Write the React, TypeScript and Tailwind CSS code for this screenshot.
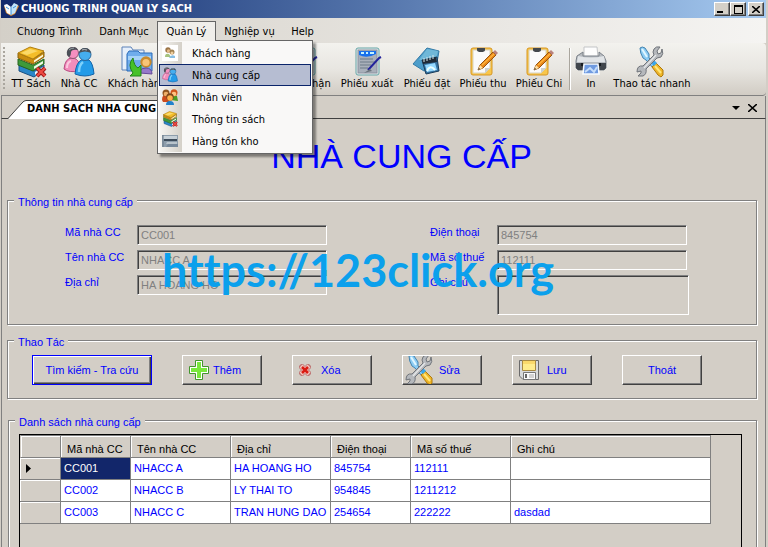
import type { ReactNode } from "react";

const UI_FONT = "font-['DejaVu_Sans_Condensed','Noto_Sans',sans-serif]";

type IconProps = { className?: string };

function BooksIcon({ className = "size-8" }: IconProps) {
  return (
    <svg viewBox="0 0 32 32" className={className} aria-hidden="true">
      <path d="M4 19 L19 25 L29 19 V24 L19 31 L4 25Z" fill="#2a86c8" stroke="#1a4f80" />
      <path d="M20 26 L28 21 V23.500 L20 29Z" fill="#eef6fb" />
      <path d="M3 13 L18 19 L29 13 V18 L18 25 L3 19Z" fill="#3f9a3a" stroke="#28651f" />
      <path d="M19 20.500 L28 15 V17.500 L19 23Z" fill="#f4f8ec" />
      <path d="M3 7 L18 13 L29 6 V11 L18 18 L3 12Z" fill="#c98d10" stroke="#8a620c" />
      <path d="M19 14.500 L28 8.500 V10.500 L19 16.500Z" fill="#fffbe6" />
      <path d="M3 7 L15 1 L29 5 L18 13Z" fill="#f4bd28" stroke="#b17e0f" />
      <path d="M6 7 L15 3 L23 5 L12 9Z" fill="#fbd968" />
      <path d="M22 22 L30 30 M30 22 L22 30" stroke="#9c1616" strokeWidth="4" />
      <path d="M22 22 L30 30 M30 22 L22 30" stroke="#ee4a42" strokeWidth="2.2" />
    </svg>
  );
}

function SuppliersIcon({ className = "size-8" }: IconProps) {
  return (
    <svg viewBox="0 0 32 32" className={className} aria-hidden="true">
      <path d="M1 23 Q2 12 9 12 Q14 12 16 17 V25 Q6 27 1 23Z" fill="#f28dbb" stroke="#b84a80" />
      <path d="M4 22 Q4 16 8 15" fill="none" stroke="#fbc9df" strokeWidth="2" />
      <circle cx="10" cy="7" r="5.5" fill="#f58fc0" stroke="#8d5570" />
      <path d="M4 9 Q3 1 10 1 Q14 1 15 4 Q9 3 8 6 Q8 10 6 11Z" fill="#4b5057" />
      <path d="M6 4 Q8 2 11 2" fill="none" stroke="#9fa5ab" />
      <path d="M12 28 Q13 17 18 14 H26 Q30 17 31 28 Q22 32 12 28Z" fill="#249be8" stroke="#1263a8" />
      <path d="M16 26 Q16 19 20 16" fill="none" stroke="#7ed1fa" strokeWidth="2.5" />
      <circle cx="22" cy="8.500" r="6" fill="#45aeef" stroke="#2a679b" />
      <path d="M16 7 Q17 2 22 2 Q27 2 28 7 Q22 4 16 7Z" fill="#4b5057" />
      <path d="M19 4 Q21 3 24 4" fill="none" stroke="#b4babf" />
    </svg>
  );
}

function CustomerFolderIcon({ className = "size-8" }: IconProps) {
  return (
    <svg viewBox="0 0 32 32" className={className} aria-hidden="true">
      <path d="M1 1 H10 L12 4 H23 V24 H1Z" fill="#e6effa" stroke="#5c82b8" />
      <path d="M6 8 L8 5 H17 L19 7 H31 V25 H6Z" fill="#6facec" stroke="#2b6bb7" />
      <path d="M7 10 H30 V14 H7Z" fill="#a6d2f8" />
      <circle cx="25" cy="16" r="5.7" fill="#c88a2c" />
      <circle cx="25" cy="16.5" r="3.6" fill="#f8c477" />
      <path d="M19 27 V25 Q20 22 25 22 Q31 22 31 28Z" fill="#9678c9" stroke="#654998" />
      <path d="M12 12 Q13 20 17 22 L20 19 V30 H9 L12 27 Q6 19 12 12Z" fill="#46c128" stroke="#23821a" />
    </svg>
  );
}

function VoucherIcon({ className = "size-8" }: IconProps) {
  return (
    <svg viewBox="0 0 32 32" className={className} aria-hidden="true">
      <rect x="5" y="2" width="23" height="27" rx="2" fill="#e6ecec" stroke="#64a4a6" />
      <rect x="7" y="4" width="19" height="23" fill="#a9b0ba" stroke="#8b92a0" />
      <path d="M8 5 H25 V8 Q16 13 8 9Z" fill="#1770ed" />
      <path d="M10 7 h3 m2 0 h2 m2 0 h4" stroke="#c6f4ff" strokeWidth="2" />
      <path d="M9 13 H22 M9 16 H24 M9 19 H20 M9 22 H17" stroke="#6d7a88" />
      <path d="M17 24 L28 12 L30 11" fill="none" stroke="#24249b" strokeWidth="2" />
      <path d="M13 27 L19 23 L21 25Z" fill="#6a747b" />
    </svg>
  );
}

function OrderIcon({ className = "size-8" }: IconProps) {
  return (
    <svg viewBox="0 0 32 32" className={className} aria-hidden="true">
      <path d="M2 18 L16 2 L28 5 L25 22 L13 25Z" fill="#4c9dca" stroke="#347ba6" />
      <path d="M16 3 L27 5 L25 13 L8 14Z" fill="#70b8d8" />
      <path d="M11 14 L26 11 L28 25 L15 28Z" fill="#3774a3" stroke="#173c5b" />
      <path d="M11 14 L25 11 L26 16 L12 18Z" fill="#202c38" />
      <path d="M13 12 v4 m3 -5 v4 m3 -5 v4 m3 -5 v4" stroke="#d5e7ec" />
      <path d="M14 19 L24 17 L26 24 L16 26Z" fill="#94d9ff" />
      <path d="M16 25 Q19 18 24 24" fill="none" stroke="#eaffff" strokeWidth="2" />
    </svg>
  );
}

function ClipboardIcon({ className = "size-8" }: IconProps) {
  return (
    <svg viewBox="0 0 32 32" className={className} aria-hidden="true">
      <rect x="4" y="2" width="21" height="27" rx="2" fill="#f8c64b" stroke="#d69724" />
      <path d="M6 4 H23 V22 L18 27 H6Z" fill="#fafafa" stroke="#d7d1bd" />
      <path d="M18 27 V22 H23Z" fill="#cbd0d0" />
      <path d="M10 2 H18 V4 Q18 6 14 6 Q10 6 10 4Z" fill="#43484d" />
      <path d="M11 24 L13 19 L26 6 L29 9 L16 22Z" fill="#e88618" stroke="#965410" />
      <path d="M15 19 L27 8" stroke="#ffb53c" strokeWidth="1.2" />
      <path d="M11 24 L13 19 L16 22Z" fill="#ffe0a2" />
      <path d="M11 24 L12 22 L13 23Z" fill="#262626" />
      <path d="M26 6 L29 9 L31 7 L28 4Z" fill="#ba827d" />
    </svg>
  );
}

function PrinterIcon({ className = "size-8" }: IconProps) {
  return (
    <svg viewBox="0 0 32 32" className={className} aria-hidden="true">
      <path d="M9 1 H22 L23 11 H9Z" fill="#fdfdfd" stroke="#c3c5c7" />
      <path d="M2 10 L8 6 V10 H24 V6 L29 10 L31 15 V22 L29 24 H3 L1 22 V15Z" fill="#b7bbc0" stroke="#7b8189" />
      <path d="M3 10 Q16 13 29 10 L30 16 H2Z" fill="#e1e4e7" />
      <path d="M1 17 H31 V22 L29 24 H3 L1 22Z" fill="#41464c" />
      <path d="M6 17 H26 V20 H6Z" fill="#181c21" />
      <path d="M9 18 H23 L24 28 H8Z" fill="#6f9ae0" stroke="#f8fcff" strokeWidth="1.5" />
      <path d="M10 26 L15 22 L19 26 L22 21" stroke="#c5ddfa" fill="none" strokeWidth="2" />
    </svg>
  );
}

function ToolsIcon({ className = "size-8" }: IconProps) {
  return (
    <svg viewBox="0 0 32 32" className={className} aria-hidden="true">
      <path d="M4 2 Q6 0 9 2 L13 8 V12 L20 19 L17 22 L10 14 L7 12 Q4 7 4 2Z" fill="#8cccf4" stroke="#4484b0" />
      <path d="M6 3 L11 11" stroke="#dff6ff" strokeWidth="2" />
      <path d="M16 21 L20 17 L27 24 V29 L25 31 L22 29Z" fill="#efb629" stroke="#ae790b" />
      <path d="M19 20 L25 27" stroke="#ffe77a" strokeWidth="2" />
      <path d="M15 17 L18 14 L21 17 L18 20Z" fill="#3aa7ec" />
      <path d="M18 3 Q20 0 24 1 L21 5 L22 8 L25 7 L26 3 Q28 8 25 11 L21 12 L10 23 Q11 28 7 30 L2 30 L5 27 L5 25 L1 26 Q1 19 7 20 L18 9 Q16 6 18 3Z" fill="#b5b8bc" stroke="#71757b" />
      <path d="M8 22 L20 9" stroke="#e5e7e9" strokeWidth="1.3" />
    </svg>
  );
}

function CustomerIcon({ className = "size-4" }: IconProps) {
  return (
    <svg viewBox="0 0 16 16" className={className} aria-hidden="true">
      <path d="M0 0 H16 V16 H0Z" fill="#fff" />
      <circle cx="6" cy="5" r="2.7" fill="#9b7548" />
      <circle cx="6.500" cy="6" r="1.700" fill="#e7bc87" />
      <path d="M3 12 Q3 8 7 9 L9 12Z" fill="#a6c37f" />
      <circle cx="10" cy="7" r="2.500" fill="#a08050" />
      <circle cx="10" cy="8" r="1.500" fill="#efcf9f" />
      <path d="M7 13 Q9 9 13 11 V13Z" fill="#85bde5" />
    </svg>
  );
}

function StaffIcon({ className = "size-4" }: IconProps) {
  return (
    <svg viewBox="0 0 16 16" className={className} aria-hidden="true">
      <path d="M0 11 Q0 5 5 6 L8 13 H1Z" fill="#cc4b1d" />
      <circle cx="4" cy="4" r="3.5" fill="#8f5621" />
      <circle cx="4" cy="5" r="2.3" fill="#efaf68" />
      <path d="M8 11 Q10 5 15 7 L16 12Z" fill="#4a9d24" />
      <circle cx="12" cy="3.8" r="3.5" fill="#d0561c" />
      <circle cx="12" cy="5" r="2.3" fill="#ffc380" />
      <circle cx="8" cy="8" r="3.7" fill="#7d4619" />
      <circle cx="8" cy="9" r="2.8" fill="#ffb14d" />
      <path d="M4 16 Q4 12 8 12 Q12 12 12 16Z" fill="#2182cc" />
    </svg>
  );
}

function StockIcon({ className = "size-4" }: IconProps) {
  return (
    <svg viewBox="0 0 16 16" className={className} aria-hidden="true">
      <path d="M0 2 H16 V14 H0Z" fill="#8d9dab" />
      <path d="M1 3 H15 V6 H1Z" fill="#c6d0d7" />
      <path d="M2 6 H15 V8 H2Z" fill="#3c4b5a" />
      <path d="M5 9 H15 V11 H4Z" fill="#b9c4cc" />
      <path d="M6 11 H16 V14 H4Z" fill="#76889a" />
      <path d="M1 2 V14" stroke="#6b7b89" />
    </svg>
  );
}

function BookLogo() {
  return (
    <svg viewBox="0 0 16 16" className="size-4" aria-hidden="true">
      <path d="M1 5 L3 12 L8 15 L12 13 L16 5 L13 3 L8 7Z" fill="#e08a2c" />
      <path d="M1 4 L4 3 L8 6 V14 L4 12Z" fill="#f9fbff" />
      <path d="M8 6 L11 2 L15 4 L12 12 L8 14Z" fill="#c2e4fa" />
      <path d="M8 6 V14 M3 6 L6 8 M10 7 L13 5" stroke="#3f93da" />
    </svg>
  );
}

function PlusIcon() {
  return (
    <svg viewBox="0 0 20 20" className="size-5" aria-hidden="true">
      <path d="M6.5.5 h7 v6 h6 v7 h-6 v6 h-7 v-6 h-6 v-7 h6Z" fill="#fff" stroke="#43962d" />
      <path d="M8 2 h4 v6 h6 v4 h-6 v6 h-4 v-6 h-6 v-4 h6Z" fill="#79e83b" />
    </svg>
  );
}

function DeleteIcon() {
  return (
    <svg viewBox="0 0 12 12" className="size-3" aria-hidden="true">
      <path d="M2 0 H4 L6 2 L8 0 H10 L12 2 V4 L10 6 L12 8 V10 L10 12 H8 L6 10 L4 12 H2 L0 10 V8 L2 6 L0 4 V2Z" fill="#bd7674" />
      <path d="M2 2 L10 10 M10 2 L2 10" stroke="#f4c4bd" strokeWidth="4" />
      <path d="M3 3 L9 9 M9 3 L3 9" stroke="#d91c12" strokeWidth="2.6" />
    </svg>
  );
}

function SaveIcon() {
  return (
    <svg viewBox="0 0 20 20" className="size-5" aria-hidden="true">
      <path d="M.5.5 H19.5 V19.5 H4 L.5 16Z" fill="#d8dadb" stroke="#6b6b6b" />
      <path d="M3.5.5 H16.5 V10.5 H3.5Z" fill="#ffec8c" stroke="#a98a42" />
      <path d="M4 1 H16 V4 H4Z" fill="#fad96b" />
      <path d="M4.500 12.500 H16.500 V19.500 H4.500Z" fill="#f9f9f9" stroke="#777" />
      <path d="M6 14 H8 V18 H6Z M10 14 H15 V18 H10Z" fill="#d2d2d2" />
      <path d="M6 14 H8 V18 H6Z" fill="#666" />
    </svg>
  );
}

function MenuButton({ children, width }: { children: string; width: string }) {
  return (
    <button type="button" className={`h-5 ${width} pt-0.5 text-center`}>
      {children}
    </button>
  );
}

const menuItems = [
  { label: "Khách hàng", icon: <CustomerIcon /> },
  { label: "Nhà cung cấp", icon: <SuppliersIcon className="size-4" />, active: true },
  { label: "Nhân viên", icon: <StaffIcon /> },
  { label: "Thông tin sách", icon: <BooksIcon className="size-4" /> },
  { label: "Hàng tồn kho", icon: <StockIcon /> },
];

function ManagementMenu() {
  return (
    <div className="relative z-20">
      <button
        type="button"
        aria-expanded="true"
        className="relative z-10 h-5 w-[59px] border border-b-0 border-[#666] bg-[#f0eeea] pt-px"
      >
        Quản Lý
      </button>
      <div
        role="menu"
        className="absolute top-[19px] left-0 w-[156px] border border-[#666] bg-[#f9f8f7] p-px shadow-[3px_3px_2px_#0006]"
      >
        {menuItems.map((item) => (
          <button
            key={item.label}
            type="button"
            role="menuitem"
            className={`flex h-[22px] w-full items-center border text-left ${
              item.active ? "border-[#0a246a] bg-[#b6bdd2]" : "border-transparent"
            }`}
          >
            <span
              className={`-my-px flex h-[22px] w-[22px] items-center pl-0.5 ${
                item.active ? "" : "bg-linear-to-r from-[#f5f4f1] to-[#d4d0c8]"
              }`}
            >
              {item.icon}
            </span>
            <span className="pt-0.5 pl-2.5">{item.label}</span>
          </button>
        ))}
      </div>
    </div>
  );
}

function ToolButton({ icon, label, width }: { icon: ReactNode; label: string; width: string }) {
  return (
    <button type="button" className={`flex shrink-0 flex-col items-center whitespace-nowrap ${width}`}>
      {icon}
      <span className="leading-3">{label}</span>
    </button>
  );
}

function WindowButton({ label, children }: { label: string; children: ReactNode }) {
  return (
    <button
      type="button"
      aria-label={label}
      className="flex h-[14px] w-4 items-center justify-center border border-t-white border-r-[#404040] border-b-[#404040] border-l-white bg-[#d4d0c8] shadow-[inset_-1px_-1px_0_#808080]"
    >
      {children}
    </button>
  );
}

function Group({ title, className, children }: { title: string; className: string; children: ReactNode }) {
  return (
    <fieldset
      className={`mr-2 border border-[#808080] shadow-[inset_1px_1px_0_#fff,1px_1px_0_#fff] ${className}`}
    >
      <legend className="ml-1.5 bg-[#d3cec6] px-1 pt-1 leading-[14px]">{title}</legend>
      {children}
    </fieldset>
  );
}

const sunken =
  "block resize-none border border-t-[#808080] border-r-white border-b-white border-l-[#808080] bg-transparent px-[3px] text-[#808080] shadow-[inset_1px_1px_0_#404040] outline-none";

function Field({ id, label, value, labelWidth }: { id: string; label: string; value: string; labelWidth: string }) {
  return (
    <div className="flex h-5">
      <label htmlFor={id} className={`${labelWidth} shrink-0 leading-[14px]`}>
        {label}
      </label>
      <input id={id} defaultValue={value} readOnly className={`${sunken} h-5 w-[190px]`} />
    </div>
  );
}

function ActionButton({ icon, children, pad = "" }: { icon?: ReactNode; children: string; pad?: string }) {
  return (
    <button
      type="button"
      className={`flex h-[30px] w-20 items-center overflow-hidden border border-t-white border-r-[#404040] border-b-[#404040] border-l-white shadow-[inset_-1px_-1px_0_#808080] ${
        icon ? "" : "justify-center"
      } ${pad}`}
    >
      {icon}
      {children}
    </button>
  );
}

const columns = ["Mã nhà CC", "Tên nhà CC", "Địa chỉ", "Điện thoại", "Mã số thuế", "Ghi chú"];

const suppliers = [
  ["CC001", "NHACC A", "HA HOANG HO", "845754", "112111", ""],
  ["CC002", "NHACC B", "LY THAI TO", "954845", "1211212", ""],
  ["CC003", "NHACC C", "TRAN HUNG DAO", "254654", "222222", "dasdad"],
];

function SupplierTable() {
  return (
    <table className="w-[691px] table-fixed border-separate border-spacing-0 text-left">
      <colgroup>
        <col className="w-[41px]" />
        <col className="w-[70px]" />
        <col className="w-[100px]" />
        <col className="w-[100px]" />
        <col className="w-20" />
        <col className="w-[100px]" />
        <col className="w-[200px]" />
      </colgroup>
      <thead>
        <tr className="h-[23px] text-black">
          <th className="border border-[#808080] border-l-transparent p-0 shadow-[inset_1px_1px_0_#fff]" />
          {columns.map((name) => (
            <th
              key={name}
              className="border-y border-r border-[#808080] p-0 pt-1 pl-1.5 leading-4 font-normal whitespace-nowrap shadow-[inset_1px_1px_0_#fff]"
            >
              {name}
            </th>
          ))}
        </tr>
      </thead>
      <tbody>
        {suppliers.map((row, rowIndex) => (
          <tr key={row[0]} className="h-[22px]">
            <th className="border-r border-b border-[#808080] p-0 pl-1.5 shadow-[inset_1px_1px_0_#fff]">
              {rowIndex === 0 && (
                <svg viewBox="0 0 5 9" className="h-[9px] w-[5px]" aria-hidden="true">
                  <path d="M0 0 L5 4.500 L0 9Z" fill="#000" />
                </svg>
              )}
            </th>
            {row.map((cell, cellIndex) => (
              <td
                key={columns[cellIndex]}
                className={`border-r border-b border-[#808080] p-0 pl-[3px] whitespace-nowrap ${
                  rowIndex === 0 && cellIndex === 0 ? "bg-[#12266a] text-white" : "bg-white"
                }`}
              >
                {cell}
              </td>
            ))}
          </tr>
        ))}
      </tbody>
    </table>
  );
}

export default function App() {
  return (
    <div
      className={`relative flex h-screen flex-col overflow-hidden bg-[#d3cec6] pr-0.5 pl-px text-[11px] text-black ${UI_FONT}`}
    >
      <header className="flex h-[18px] shrink-0 items-center bg-linear-to-r from-[#12286b] to-[#a6caf0] pr-0.5 pl-0.5 font-bold text-white">
        <BookLogo />
        <span className="flex-1 pl-0.5">CHUONG TRINH QUAN LY SACH</span>
        <WindowButton label="Thu nhỏ">
          <span className="mt-1.5 mr-1 h-0.5 w-1.5 bg-black" />
        </WindowButton>
        <WindowButton label="Phóng to">
          <span className="h-[9px] w-[9px] border border-t-2 border-black" />
        </WindowButton>
        <span className="w-0.5" />
        <WindowButton label="Đóng">
          <svg viewBox="0 0 8 7" className="h-[7px] w-2" aria-hidden="true">
            <path d="M0 0 L8 7 M8 0 L0 7" stroke="#000" strokeWidth="1.6" />
          </svg>
        </WindowButton>
      </header>

      <nav className="flex h-[25px] shrink-0 bg-linear-to-r from-[#d4d0c8] to-[#f5f4f2] pt-[3px] pl-[7px]">
        <MenuButton width="w-[83px]">Chương Trình</MenuButton>
        <MenuButton width="w-[66px]">Danh Mục</MenuButton>
        <ManagementMenu />
        <MenuButton width="w-[67px]">Nghiệp vụ</MenuButton>
        <MenuButton width="w-[39px]">Help</MenuButton>
      </nav>

      <div
        role="toolbar"
        className="flex h-[53px] shrink-0 items-start rounded-r-sm border-b border-[#808080] bg-linear-to-b from-[#f3f2ee] via-[#e8e6e1] to-[#d1ccc4] pt-[3px] pl-0.5"
      >
        <span className="mt-px mr-0.5 h-11 w-0.5 bg-[repeating-linear-gradient(#aaa69e_0_2px,transparent_2px_4px)]" />
        <ToolButton icon={<BooksIcon />} label="TT Sách" width="w-12" />
        <ToolButton icon={<SuppliersIcon />} label="Nhà CC" width="w-12" />
        <ToolButton icon={<CustomerFolderIcon />} label="Khách hàng" width="w-[68px]" />
        <span className="w-[100px]" />
        <ToolButton icon={<VoucherIcon />} label="Phiếu nhận" width="w-16" />
        <ToolButton icon={<VoucherIcon />} label="Phiếu xuất" width="w-16" />
        <ToolButton icon={<OrderIcon />} label="Phiếu đặt" width="w-14" />
        <ToolButton icon={<ClipboardIcon />} label="Phiếu thu" width="w-14" />
        <ToolButton icon={<ClipboardIcon />} label="Phiếu Chi" width="w-14" />
        <span className="mt-0.5 mr-0.5 ml-0.5 h-[42px] w-0.5 border-r border-l border-r-white border-l-[#aaa69e]" />
        <ToolButton icon={<PrinterIcon />} label="In" width="w-9" />
        <ToolButton icon={<ToolsIcon />} label="Thao tác nhanh" width="w-[86px]" />
      </div>

      <div className="flex h-[23px] shrink-0 items-end border-x border-b border-[#808080] border-b-[#404040]">
        <svg viewBox="0 0 18 19" className="-mb-px ml-1.5 h-[19px] w-[18px]" aria-hidden="true">
          <path d="M0 19 L14 3 Q16 .5 18 .5 V19Z" fill="#fff" />
          <path d="M0 18.500 L14 3 Q16 .5 18 .5" fill="none" stroke="#404040" />
        </svg>
        <button
          type="button"
          className="-mb-px h-[19px] border-t border-r border-[#404040] bg-white pr-1 pb-0.5 pl-px font-bold whitespace-nowrap"
        >
          DANH SACH NHA CUNG CAP
        </button>
        <span className="flex-1" />
        <button type="button" aria-label="Danh sách thẻ" className="mb-2 h-1 w-2">
          <svg viewBox="0 0 8 4" className="h-1 w-2" aria-hidden="true">
            <path d="M0 0 H8 L4 4Z" />
          </svg>
        </button>
        <button type="button" aria-label="Đóng thẻ" className="mr-2 mb-1.5 ml-2 h-2 w-[9px]">
          <svg viewBox="0 0 9 8" className="h-2 w-[9px]" aria-hidden="true">
            <path d="M0 0 L9 8 M9 0 L0 8" stroke="#000" strokeWidth="1.6" />
          </svg>
        </button>
      </div>

      <main className="flex-1 border-x border-[#808080] font-['Liberation_Sans',Arial,sans-serif] text-[#0000ff]">
        <h1 className="mt-4 pl-9 text-center text-[34px] leading-[42px]">NHÀ CUNG CẤP</h1>

        <Group title="Thông tin nhà cung cấp" className="mt-3.5 ml-[5px] pt-4 pb-[9px]">
          <div className="flex pl-[57px]">
            <div className="flex w-[365px] shrink-0 flex-col gap-[5px]">
              <Field id="code" label="Mã nhà CC" value="CC001" labelWidth="w-[72px]" />
              <Field id="name" label="Tên nhà CC" value="NHACC A" labelWidth="w-[72px]" />
              <Field id="address" label="Địa chỉ" value="HA HOANG HO" labelWidth="w-[72px]" />
            </div>
            <div className="flex flex-col gap-[5px]">
              <Field id="phone" label="Điện thoại" value="845754" labelWidth="w-[67px]" />
              <Field id="tax" label="Mã số thuế" value="112111" labelWidth="w-[67px]" />
              <div className="flex">
                <label htmlFor="note" className="w-[67px] shrink-0 leading-[14px]">
                  Ghi chú
                </label>
                <textarea id="note" readOnly className={`${sunken} h-10 w-48`} />
              </div>
            </div>
          </div>
        </Group>

        <Group title="Thao Tác" className="mt-1.5 ml-[5px] pt-1.5 pb-[13px]">
          <div className="flex gap-[30px] pl-6">
            <button
              type="button"
              className="h-[30px] w-[120px] border border-[#0000ff] shadow-[inset_1px_1px_0_#fff,inset_-1px_-1px_0_#404040,inset_-2px_-2px_0_#808080]"
            >
              Tìm kiếm - Tra cứu
            </button>
            <ActionButton icon={<PlusIcon />} pad="gap-1 pl-1.5">
              Thêm
            </ActionButton>
            <ActionButton icon={<DeleteIcon />} pad="gap-2.5 pl-1.5">
              Xóa
            </ActionButton>
            <ActionButton icon={<ToolsIcon className="size-8 shrink-0" />} pad="gap-0.5 pl-0.5">
              Sửa
            </ActionButton>
            <ActionButton icon={<SaveIcon />} pad="gap-2 pl-1.5">
              Lưu
            </ActionButton>
            <ActionButton>Thoát</ActionButton>
          </div>
        </Group>

        <Group title="Danh sách nhà cung cấp" className="mt-3 ml-1.5 pb-3">
          <div className="mt-[5px] mr-3.5 ml-2.5 min-h-44 border border-black">
            <SupplierTable />
          </div>
        </Group>
      </main>

      <div className="pointer-events-none absolute top-[243px] left-[162px] font-['Lato',sans-serif] text-[45px] leading-[54px] font-bold whitespace-nowrap text-[#0ba0ec] [font-variant-ligatures:none]">
        https://123click.org
      </div>
    </div>
  );
}
